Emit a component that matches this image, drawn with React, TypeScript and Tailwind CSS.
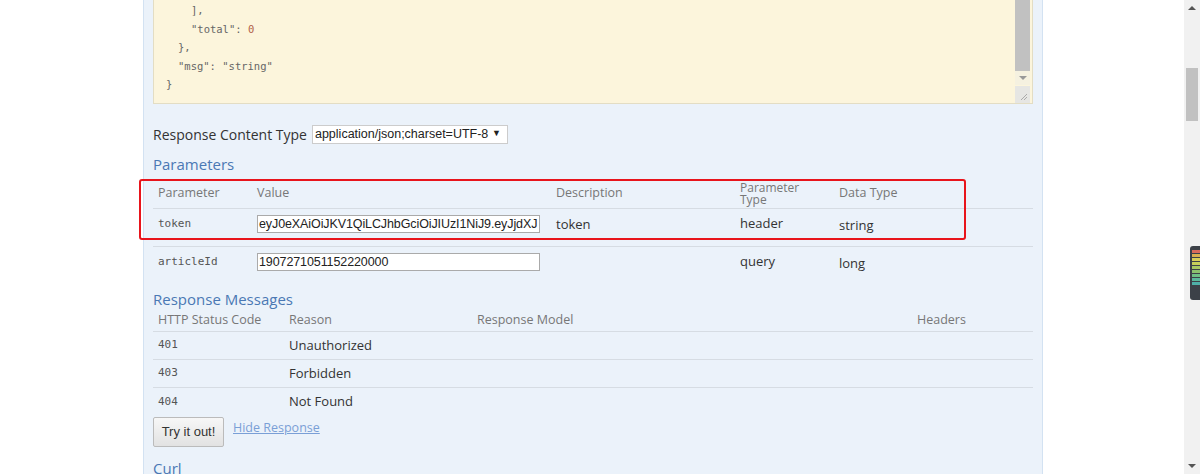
const sans = "font-['Open_Sans','Noto_Sans',sans-serif]";
const mono = "font-['DejaVu_Sans_Mono','Liberation_Mono',monospace]";
const arial = "font-['Liberation_Sans',Arial,sans-serif]";

function JsonBox() {
  return (
    <div className="flex h-[104px] border-x border-b border-[#e3ddc4] bg-[#fcf5dc]">
      <div className={`flex-1 pt-[1px] pl-[12px] text-[10.5px] leading-[18.5px] text-[#666] ${mono}`}>
        <div className="pl-[25px]">],</div>
        <div className="pl-[25px]">
          "total": <span className="text-[#b0604a]">0</span>
        </div>
        <div className="pl-[12px]">{'},'}</div>
        <div className="pl-[12px]">"msg": "string"</div>
        <div>{'}'}</div>
      </div>
      <div className="flex w-[15px] flex-col">
        <div className="h-[71px] bg-[#c1c1c1]" />
        <div className="flex h-[14px] items-center justify-center bg-[#f5f1e0]">
          <div className="h-0 w-0 border-x-[4px] border-t-[4px] border-x-transparent border-t-[#999]" />
        </div>
        <div className="mt-auto flex h-[17px] items-end justify-end bg-[#e6e6e3] p-[2px]">
          <svg width="10" height="10" viewBox="0 0 10 10">
            <path d="M9 3 L3 9 M9 6 L6 9" stroke="#aaa" strokeWidth="1" />
          </svg>
        </div>
      </div>
      <div className="w-[2px]" />
    </div>
  );
}

function ParamRow({ name, value, desc, type, dtype, rowClass }: { name: string; value: string; desc: string; type: string; dtype: string; rowClass: string }) {
  return (
    <div className={`flex items-start pt-[6px] ${rowClass}`}>
      <div className={`w-[104px] pl-[5px] text-[11px] leading-[18px] text-[#555] ${mono}`}>{name}</div>
      <div className="w-[299px]">
        <div className={`h-[18px] w-[283px] overflow-hidden border border-[#aaa] bg-white pl-[1px] text-[12.5px] leading-[16px] tracking-[-0.1px] text-[#222] whitespace-nowrap ${arial}`}>
          {value}
        </div>
      </div>
      <div className="w-[184px] text-[13px] leading-[18px] text-[#333]">{desc}</div>
      <div className="w-[99px] text-[13px] leading-[17px] text-[#333]">{type}</div>
      <div className="pt-[1px] text-[13px] leading-[18px] text-[#333]">{dtype}</div>
    </div>
  );
}

function MsgRow({ code, reason, last }: { code: string; reason: string; last?: boolean }) {
  return (
    <div className={`flex h-[28px] items-center ${last ? '' : 'border-b border-[#d6dce3]'}`}>
      <div className={`w-[136px] pl-[5px] text-[11px] text-[#555] ${mono}`}>{code}</div>
      <div className="text-[13px] text-[#333]">{reason}</div>
    </div>
  );
}

export default function App() {
  return (
    <div className={`relative flex h-[474px] w-[1200px] overflow-hidden bg-white ${sans}`}>
      <div className="w-[143px]" />
      <div className="w-[900px] border-x border-[#d3e2f2] bg-[#ebf2fa] px-[9px]">
        <JsonBox />

        <div className="mt-[20px] flex h-[20px] items-center text-[14px] text-[#333]">
          <span>Response Content Type</span>
          <div className={`ml-[5px] flex h-[19px] w-[196px] items-center justify-between border border-[#ccc] bg-white pl-[2px] pr-[6px] text-[12.5px] text-[#222] ${arial}`}>
            <span>application/json;charset=UTF-8</span>
            <span className="text-[9px]">▼</span>
          </div>
        </div>

        <h4 className="mt-[9px] text-[15px] leading-[22px] text-[#4a78b4]">Parameters</h4>

        <div className="relative mt-[4px]">
          <div className="flex h-[30px] items-center border-b border-[#d6dce3] text-[12.5px] text-[#777]">
            <div className="w-[104px] pl-[5px]">Parameter</div>
            <div className="w-[299px]">Value</div>
            <div className="w-[184px]">Description</div>
            <div className="flex w-[99px] flex-col text-[12px] leading-[12px]">
              <span>Parameter</span>
              <span>Type</span>
            </div>
            <div>Data Type</div>
          </div>
          <ParamRow name="token" value="eyJ0eXAiOiJKV1QiLCJhbGciOiJIUzI1NiJ9.eyJjdXJ" desc="token" type="header" dtype="string" rowClass="h-[38px] border-b border-[#d6dce3]" />
          <ParamRow name="articleId" value="1907271051152220000" desc="" type="query" dtype="long" rowClass="h-[31px]" />
          <div className="absolute left-[-14px] top-[0px] h-[61px] w-[827px] rounded-[3px] border-2 border-[#e8141b]" />
        </div>

        <h4 className="mt-[10px] text-[15px] leading-[22px] text-[#4a78b4]">Response Messages</h4>
        <div className="flex h-[22px] items-center border-b border-[#d6dce3] text-[12.5px] text-[#777]">
          <div className="w-[136px] pl-[5px]">HTTP Status Code</div>
          <div className="w-[188px]">Reason</div>
          <div className="w-[440px]">Response Model</div>
          <div>Headers</div>
        </div>
        <MsgRow code="401" reason="Unauthorized" />
        <MsgRow code="403" reason="Forbidden" />
        <MsgRow code="404" reason="Not Found" last />

        <div className="mt-[1px] flex items-start gap-[9px]">
          <button className={`h-[30px] w-[71px] rounded-[2px] border border-[#bbb] bg-gradient-to-b from-[#f7f7f7] to-[#e2e2e2] text-[13px] text-[#333] ${arial}`}>
            Try it out!
          </button>
          <a className="mt-[2px] text-[12.5px] text-[#7a9fd6] underline">Hide Response</a>
        </div>

        <h4 className="mt-[10px] text-[15px] leading-[22px] text-[#4a78b4]">Curl</h4>
      </div>
      <div className="flex-1" />
      <div className="flex w-[16px] flex-col items-center bg-[#f1f1f1]">
        <div className="mt-[6px] h-0 w-0 border-x-[4px] border-b-[4px] border-x-transparent border-b-[#555]" />
        <div className="mt-[58px] h-[53px] w-[12px] bg-[#c1c1c1]" />
        <div className="mb-[6px] mt-auto h-0 w-0 border-x-[4px] border-t-[4px] border-x-transparent border-t-[#555]" />
      </div>
      <div className="absolute left-[1190px] top-[246px] flex h-[54px] w-[12px] flex-col gap-[1px] rounded-l-[3px] bg-[#3c4148] px-[2px] py-[4px]">
        <div className="h-[3px] bg-[#d96b5b]" />
        <div className="h-[3px] bg-[#d9b04f]" />
        <div className="h-[3px] bg-[#d9cf58]" />
        <div className="h-[3px] bg-[#c6cf5a]" />
        <div className="h-[3px] bg-[#a8c862]" />
        <div className="h-[3px] bg-[#8cc26d]" />
        <div className="h-[3px] bg-[#6fbf83]" />
        <div className="h-[3px] bg-[#5bb99b]" />
        <div className="h-[3px] bg-[#4fb0a8]" />
      </div>
    </div>
  );
}
